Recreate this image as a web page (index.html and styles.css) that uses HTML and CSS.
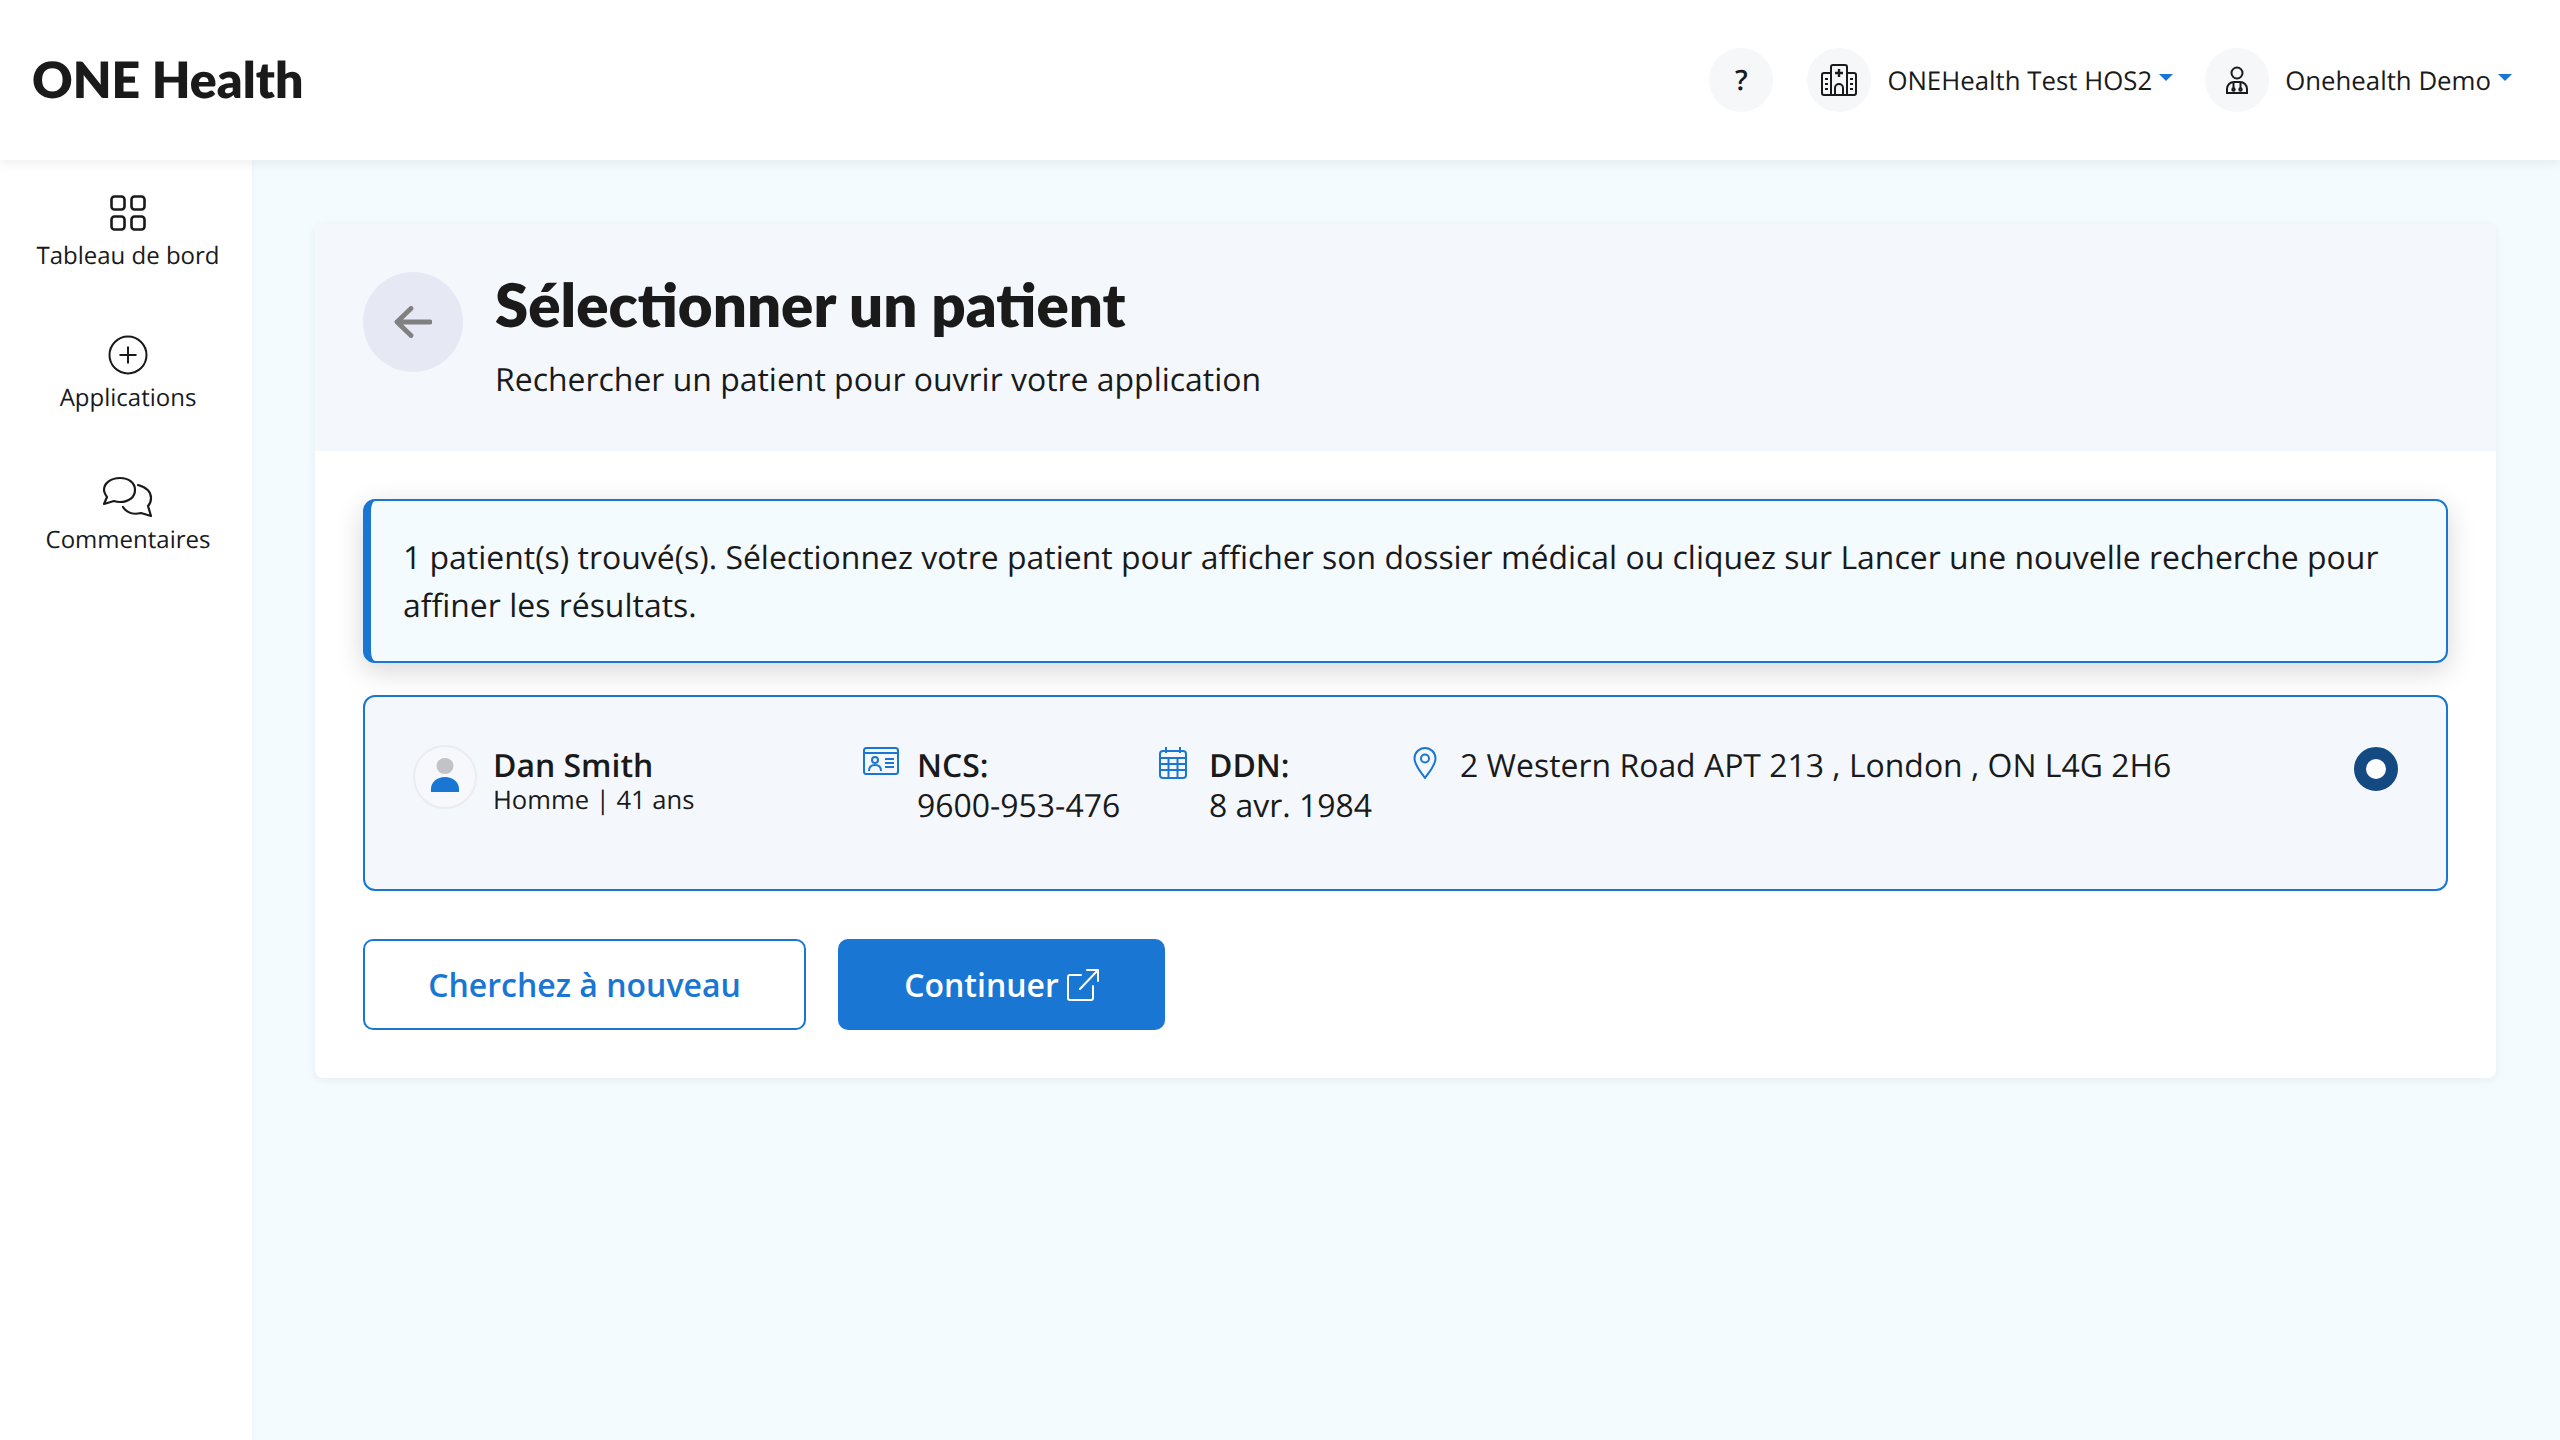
FILE: index.html
```html
<!DOCTYPE html>
<html lang="fr">
<head>
<meta charset="utf-8">
<title>ONE Health</title>
<link rel="stylesheet" href="styles.css">
</head>
<body>
<header class="topbar">
  <div class="logo">ONE Health</div>
  <div class="top-actions">
    <div class="circle help">?</div>
    <div class="circle ml-34">
      <svg width="36" height="32" viewBox="0 0 36 32" fill="none" stroke="#1a1a1a" stroke-width="2" stroke-linejoin="round"><path d="M10 31V3a2 2 0 0 1 2-2h12a2 2 0 0 1 2 2v28z"/><path d="M10 9H3a2 2 0 0 0-2 2v18a2 2 0 0 0 2 2h7M26 9h7a2 2 0 0 1 2 2v18a2 2 0 0 1-2 2h-7"/><path d="M18 5v8M14 9h8" stroke-width="2.400"/><path d="M14 31v-7a4 4 0 0 1 8 0v7M4 15h3M4 20h3M4 25h3M29 15h3M29 20h3M29 25h3"/></svg>
    </div>
    <span class="top-label">ONEHealth Test HOS2</span><span class="caret"></span>
    <div class="circle ml-32">
      <svg width="24" height="28" viewBox="0 0 24 28" fill="none" stroke="#1a1a1a" stroke-width="2"><circle cx="12" cy="7" r="5.500"/><path d="M2 27v-4a7 7 0 0 1 7-7h6a7 7 0 0 1 7 7v4z"/><path d="M8.500 16v6M15.500 16v6"/><circle cx="8.500" cy="23.500" r="1.200"/><circle cx="15.500" cy="23.500" r="1.200"/></svg>
    </div>
    <span class="top-label">Onehealth Demo</span><span class="caret"></span>
  </div>
</header>
<div class="layout">
  <nav class="sidebar">
    <a class="nav-item">
      <svg class="nav-icon" width="36" height="36" viewBox="0 0 36 36" fill="none" stroke="#1a1a1a" stroke-width="2.600"><rect x="1.500" y="1.500" width="13" height="13" rx="3"/><rect x="21.500" y="1.500" width="13" height="13" rx="3"/><rect x="1.500" y="21.500" width="13" height="13" rx="3"/><rect x="21.500" y="21.500" width="13" height="13" rx="3"/></svg>
      <span>Tableau de bord</span>
    </a>
    <a class="nav-item">
      <svg class="nav-icon" width="40" height="40" viewBox="0 0 40 40" fill="none" stroke="#1a1a1a" stroke-width="2"><circle cx="20" cy="20" r="18.500"/><path d="M20 11.500v17M11.500 20h17"/></svg>
      <span>Applications</span>
    </a>
    <a class="nav-item">
      <svg class="nav-icon" width="52" height="42" viewBox="0 0 52 42" fill="none" stroke="#1a1a1a" stroke-width="2.200" stroke-linejoin="round" stroke-linecap="round"><path d="M18 2c9 0 15 5 15 12s-6 12-15 12c-2 0-4-.3-6-1l-10 3 3-7C3 18 2 16 2 14 2 7 9 2 18 2z"/><path d="M36 9c7 2 13 6 13 13 0 3-1 6-3 8l3 10-10-3c-7 2-14 0-18-6"/></svg>
      <span>Commentaires</span>
    </a>
  </nav>
  <main class="content">
    <section class="card">
      <div class="card-head">
        <button class="back" type="button">
          <svg width="38" height="32" viewBox="0 0 38 32" fill="none" stroke="#808080" stroke-width="4.800" stroke-linecap="round" stroke-linejoin="round"><path d="M36 16H3M17 2.500 3 16l14 13.500"/></svg>
        </button>
        <div class="head-text">
          <h1>Sélectionner un patient</h1>
          <p>Rechercher un patient pour ouvrir votre application</p>
        </div>
      </div>
      <div class="card-body">
        <div class="alert">1 patient(s) trouvé(s). Sélectionnez votre patient pour afficher son dossier médical ou cliquez sur Lancer une nouvelle recherche pour affiner les résultats.</div>
        <div class="patient">
          <div class="col col-name">
            <div class="avatar">
              <svg width="30" height="34" viewBox="0 0 30 34"><ellipse cx="15" cy="8" rx="8.500" ry="8" fill="#c2c3c7"/><path d="M1 34v-3C1 24 7 19 15 19s14 5 14 12v3z" fill="#1976d2"/></svg>
            </div>
            <div class="txt">
              <div class="name">Dan Smith</div>
              <div class="sub">Homme | 41 ans</div>
            </div>
          </div>
          <div class="col col-ncs">
            <svg class="ico" width="36" height="28" viewBox="0 0 36 28" fill="none" stroke="#1976d2" stroke-width="2"><rect x="1" y="1" width="34" height="26" rx="2.500"/><path d="M1 6h34M22 12h9M22 16h9M22 20h9"/><circle cx="12" cy="13" r="3"/><path d="M6 24c0-4 2.500-6 6-6s6 2 6 6"/></svg>
            <div class="txt"><div class="label">NCS:</div><div>9600-953-476</div></div>
          </div>
          <div class="col col-ddn">
            <svg class="ico" width="28" height="32" viewBox="0 0 28 32" fill="none" stroke="#1976d2" stroke-width="2"><rect x="1" y="4" width="26" height="27" rx="3"/><path d="M7 0v6M21 0v6"/><path d="M1 11h26M1 17h26M1 23h26M9.500 11v20M18.500 11v20"/></svg>
            <div class="txt"><div class="label">DDN:</div><div>8 avr. 1984</div></div>
          </div>
          <div class="col col-addr">
            <svg class="ico" width="24" height="32" viewBox="0 0 24 32" fill="none" stroke="#1976d2" stroke-width="2"><path d="M12 31C7 24 1.500 18 1.500 11.500a10.500 10.500 0 0 1 21 0C22.500 18 17 24 12 31z"/><circle cx="12" cy="11.500" r="4"/></svg>
            <div class="txt">2 Western Road APT 213 , London , ON L4G 2H6</div>
          </div>
          <div class="radio"></div>
        </div>
        <div class="actions">
          <button class="btn btn-outline" type="button">Cherchez à nouveau</button>
          <button class="btn btn-fill" type="button">Continuer
            <svg width="32" height="32" viewBox="0 0 32 32" fill="none" stroke="#fff" stroke-width="2" stroke-linecap="round" stroke-linejoin="round"><path d="M14 6H3a2 2 0 0 0-2 2v21a2 2 0 0 0 2 2h21a2 2 0 0 0 2-2V17"/><path d="M13 20 31 1M20 1h11v11"/></svg>
          </button>
        </div>
      </div>
    </section>
  </main>
</div>
</body>
</html>
```

FILE: styles.css
```css
* { box-sizing: border-box; }
html, body { margin: 0; height: 100%; }
body {
  width: 2560px;
  height: 1440px;
  overflow: hidden;
  display: flex;
  flex-direction: column;
  background: #f3fbfe;
  color: #1a1a1a;
  font-family: "Open Sans", "Noto Sans", sans-serif;
  text-rendering: geometricPrecision;
}
.topbar {
  height: 160px;
  flex: none;
  display: flex;
  align-items: center;
  justify-content: space-between;
  padding-left: 32px;
  background: #fff;
  box-shadow: 0 2px 12px rgba(0,0,0,.08);
  position: relative;
  z-index: 2;
}
.logo { font-family: "Lato", sans-serif; font-weight: 800; font-size: 50px; margin-bottom: 2px; }
.top-actions { display: flex; align-items: center; padding-right: 48px; }
.circle {
  width: 64px; height: 64px; border-radius: 50%;
  background: #f6f7f9;
  display: flex; align-items: center; justify-content: center;
  flex: none;
}
.help { font-size: 28px; font-weight: 600; }
.ml-34 { margin-left: 34px; }
.ml-32 { margin-left: 32px; }
.top-label { font-size: 25.8px; margin-left: 16px; white-space: nowrap; }
.caret {
  width: 0; height: 0; margin-left: 7px; margin-bottom: 6px;
  border-left: 7px solid transparent; border-right: 7px solid transparent;
  border-top: 7px solid #1976d2;
}
.layout { flex: 1; display: flex; min-height: 0; }
.sidebar {
  width: 252px; flex: none; background: #fff;
  padding: 30px 0 0 4px;
  box-shadow: 1px 0 3px rgba(0,0,0,.03);
}
.nav-item {
  height: 142px; display: flex; flex-direction: column; align-items: center;
  font-size: 24px; line-height: 40px; white-space: nowrap;
}
.nav-icon { height: 46px; flex: none; }
.content { flex: 1; padding: 64px 64px 0 63px; }
.card {
  background: #fff; border-radius: 8px; overflow: hidden;
  box-shadow: 0 2px 10px rgba(0,0,0,.06);
}
.card-head {
  height: 227px; background: #f4f8fd;
  display: flex; padding: 48px; gap: 32px;
}
.back {
  width: 100px; height: 100px; border-radius: 50%; border: 0; background: #e6e9f4;
  display: flex; align-items: center; justify-content: center; padding: 0; flex: none;
}
.head-text h1 {
  margin: 0; font-family: "Lato", sans-serif; font-weight: 800; font-size: 60px; line-height: 64px;
}
.head-text p { margin: 20px 0 0; font-size: 31.95px; line-height: 48px; }
.card-body { padding: 48px 48px 48px; }
.alert {
  background: #f3fbff; border: 2px solid #1976d2; border-left-width: 8px; border-radius: 12px;
  padding: 33px 32px 31px 32px; font-size: 31.95px; line-height: 48px;
  box-shadow: 0 8px 28px rgba(0,0,0,.16);
}
.patient {
  margin-top: 32px; height: 196px; background: #f4f8fd;
  border: 2px solid #1976d2; border-radius: 12px;
  display: grid; grid-template-columns: 450px 296px 254px 1fr 44px;
  padding: 48px 48px 0;
  font-size: 31.95px; line-height: 40px;
}
.col { display: flex; gap: 18px; align-items: flex-start; }
.col-name { gap: 16px; }
.txt { padding-top: 1px; }
.avatar {
  width: 64px; height: 64px; border-radius: 50%; border: 2px solid #e9ecf0;
  background: #f6f8fc; display: flex; align-items: flex-end; justify-content: center; padding-bottom: 15px;
  flex: none;
}
.name, .label { font-weight: 600; }
.sub { font-size: 25.6px; line-height: 28px; }
.ico { flex: none; margin-top: 2px; }
.col-ddn { gap: 22px; }
.col-addr { gap: 23px; white-space: nowrap; }
.radio {
  width: 44px; height: 44px; border-radius: 50%; border: 12px solid #134a82; background: #fff; margin-top: 2px;
}
.actions { display: flex; gap: 32px; margin-top: 48px; }
.btn {
  height: 91px; border-radius: 10px; font-family: inherit; font-size: 32px; font-weight: 600;
  display: flex; align-items: center; justify-content: center; gap: 8px;
}
.btn-outline { width: 443px; background: #fff; color: #1976d2; border: 2px solid #1976d2; }
.btn-fill { width: 327px; background: #1976d2; color: #fff; border: 0; }
```
